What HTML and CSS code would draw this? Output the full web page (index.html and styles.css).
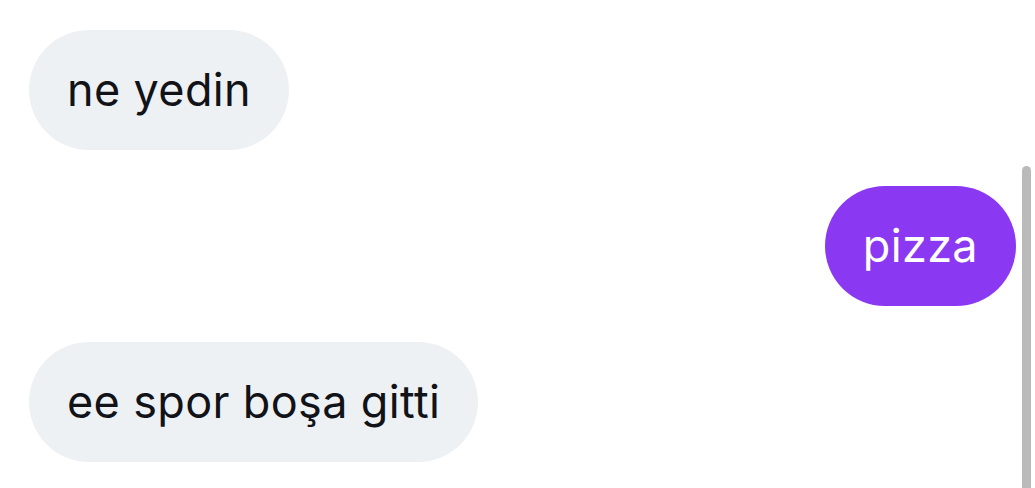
FILE: index.html
```html
<!DOCTYPE html>
<html lang="tr">
<head>
<meta charset="utf-8">
<link rel="stylesheet" href="styles.css">
</head>
<body>
<div class="chat">
  <div class="row in"><div class="bubble">ne yedin</div></div>
  <div class="row out"><div class="bubble">pizza</div></div>
  <div class="row in"><div class="bubble">ee spor boşa gitti</div></div>
</div>
<div class="scrollbar"></div>
</body>
</html>
```
FILE: styles.css
```css
html, body {
  margin: 0;
  padding: 0;
  background: #ffffff;
  overflow: hidden;
}
body {
  width: 1035px;
  height: 488px;
  font-family: Inter, "Noto Sans", sans-serif;
}
.chat {
  display: flex;
  flex-direction: column;
  gap: 36px;
  padding: 30px 19px 0 29px;
}
.row {
  display: flex;
}
.row.out {
  justify-content: flex-end;
}
.bubble {
  height: 120px;
  box-sizing: border-box;
  display: flex;
  align-items: center;
  padding: 0 38px 2px;
  border-radius: 60px;
  font-size: 45px;
  letter-spacing: 0.35px;
}
.in .bubble {
  background: #eef1f4;
  color: #111318;
}
.out .bubble {
  background: #8a38f2;
  color: #ffffff;
}
.scrollbar {
  position: absolute;
  left: 1022px;
  top: 166px;
  width: 9px;
  height: 330px;
  border-radius: 5px;
  background: #bababa;
}
```
